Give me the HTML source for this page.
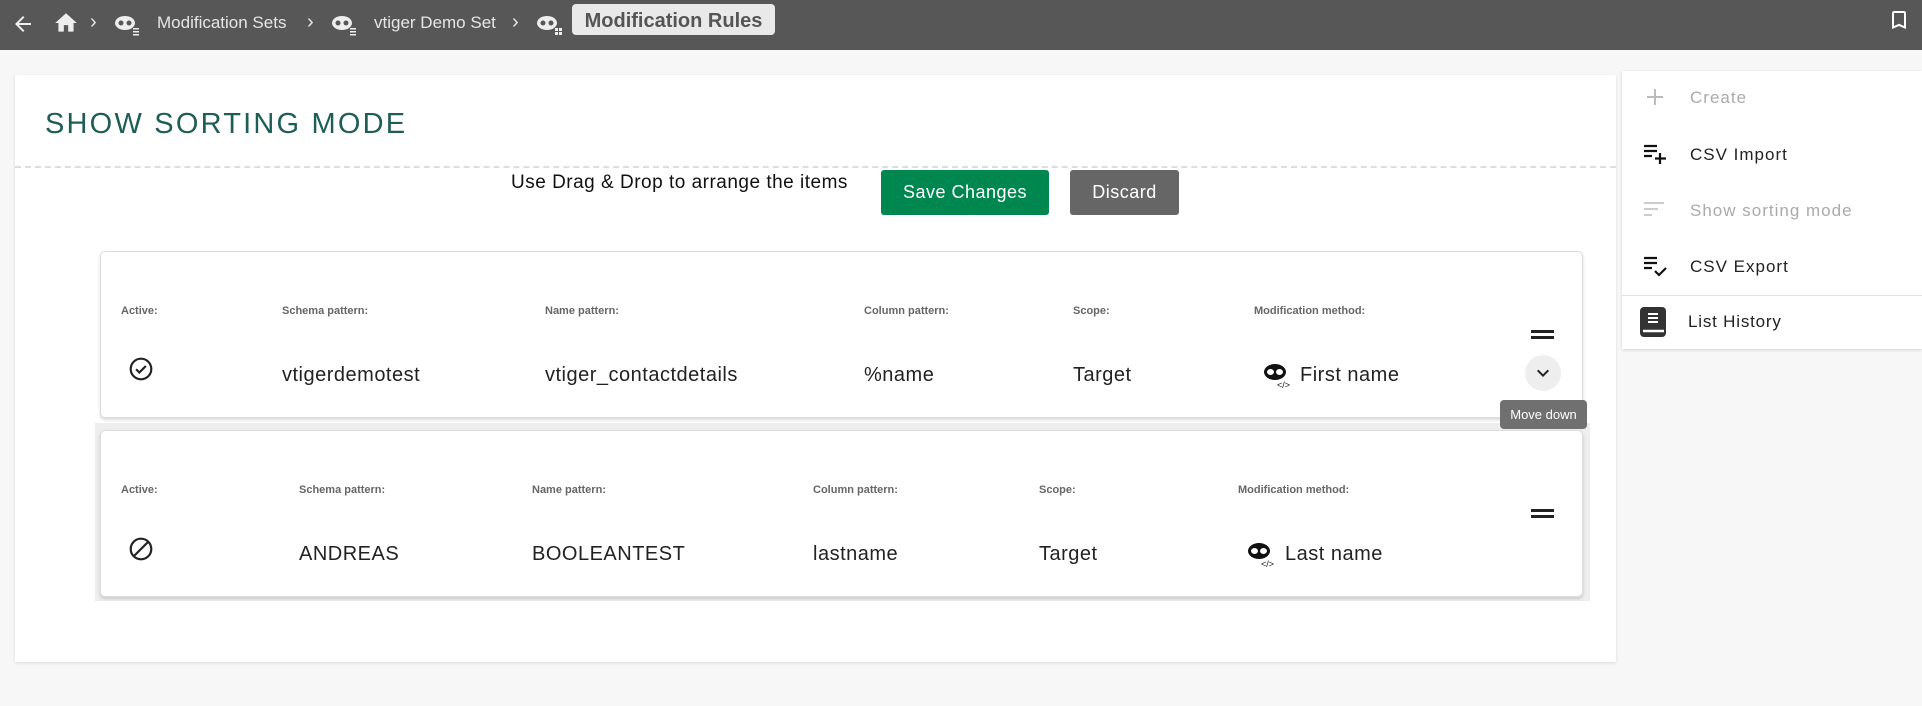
<!DOCTYPE html>
<html><head><meta charset="utf-8"><style>
*{box-sizing:border-box;margin:0;padding:0}
body{width:1922px;height:706px;background:#f7f7f7;font-family:"Liberation Sans",sans-serif;position:relative;overflow:hidden}
.abs{position:absolute}
.top{left:0;top:0;width:1922px;height:50px;background:#575757}
.bc{color:#e6e6e6;font-size:17px;top:13px}
.chip{left:572px;top:4px;width:203px;height:31px;background:#e9e9e9;border-radius:4px;color:#555;font-size:20px;font-weight:bold;line-height:34px;text-align:center}
.card{left:15px;top:75px;width:1601px;height:587px;background:#fff;box-shadow:0 1px 3px rgba(0,0,0,.12)}
.title{left:45px;top:108px;font-size:29px;color:#1f5e57;letter-spacing:2.2px}
.dash{left:15px;top:166px;width:1601px;border-top:2px dashed #ddd}
.btn{color:#fff;font-size:18px;text-align:center;line-height:45px;border-radius:3px;letter-spacing:.5px}
.row{left:100px;width:1483px;height:167px;background:#fff;border:1px solid #ddd;border-radius:5px;box-shadow:0 2px 3px rgba(0,0,0,.15)}
.lbl{font-size:11px;font-weight:bold;color:#666}
.val{font-size:20px;color:#222;letter-spacing:.5px}
.side{left:1622px;top:71px;width:300px;height:278px;background:#fff;box-shadow:0 1px 3px rgba(0,0,0,.15)}
.mi{font-size:17px;letter-spacing:1px;color:#222}
.dis{color:#aaa}
</style></head><body>
<div class="abs top"></div>
<svg class="abs" style="left:11px;top:12px" width="24" height="24" viewBox="0 0 24 24"><path d="M20 11H7.8l5.6-5.6L12 4l-8 8 8 8 1.4-1.4L7.8 13H20z" fill="#eee"/></svg>
<svg class="abs" style="left:53px;top:10px" width="26" height="26" viewBox="0 0 24 24"><path d="M10 20v-6h4v6h5v-8h3L12 3 2 12h3v8z" fill="#eee"/></svg>
<div class="abs bc" style="left:90px;top:11px;font-size:20px">›</div>
<svg class="abs" style="left:113px;top:14px" width="28" height="22" viewBox="0 0 28 22"><ellipse cx="12" cy="9" rx="10" ry="7" fill="#eee"/><circle cx="8" cy="9" r="2.5" fill="#575757"/><circle cx="16" cy="9" r="2.5" fill="#575757"/><rect x="20" y="14" width="6" height="1.5" fill="#eee"/><rect x="20" y="17" width="6" height="1.5" fill="#eee"/><rect x="20" y="20" width="6" height="1.5" fill="#eee"/></svg>
<div class="abs bc" style="left:157px">Modification Sets</div>
<div class="abs bc" style="left:307px;top:11px;font-size:20px">›</div>
<svg class="abs" style="left:330px;top:14px" width="28" height="22" viewBox="0 0 28 22"><ellipse cx="12" cy="9" rx="10" ry="7" fill="#eee"/><circle cx="8" cy="9" r="2.5" fill="#575757"/><circle cx="16" cy="9" r="2.5" fill="#575757"/><rect x="20" y="14" width="6" height="1.5" fill="#eee"/><rect x="20" y="17" width="6" height="1.5" fill="#eee"/><rect x="20" y="20" width="6" height="1.5" fill="#eee"/></svg>
<div class="abs bc" style="left:374px">vtiger Demo Set</div>
<div class="abs bc" style="left:512px;top:11px;font-size:20px">›</div>
<svg class="abs" style="left:535px;top:14px" width="28" height="22" viewBox="0 0 28 22"><ellipse cx="12" cy="9" rx="10" ry="7" fill="#eee"/><circle cx="8" cy="9" r="2.5" fill="#575757"/><circle cx="16" cy="9" r="2.5" fill="#575757"/><rect x="20" y="14" width="7" height="7" fill="#eee"/><path d="M20 17.5h7M23.5 14v7" stroke="#575757"/></svg>
<div class="abs chip">Modification Rules</div>
<svg class="abs" style="left:1887px;top:8px" width="24" height="24" viewBox="0 0 24 24"><path d="M17 3H7c-1.1 0-2 .9-2 2v16l7-3 7 3V5c0-1.1-.9-2-2-2zm0 15-5-2.2L7 18V5h10v13z" fill="#fff"/></svg>

<div class="abs card"></div>
<div class="abs title">SHOW SORTING MODE</div>
<div class="abs dash"></div>
<div class="abs" style="left:511px;top:172px;font-size:19px;color:#111;letter-spacing:.5px">Use Drag &amp; Drop to arrange the items</div>
<div class="abs btn" style="left:881px;top:170px;width:168px;background:#00874f">Save Changes</div>
<div class="abs btn" style="left:1070px;top:170px;width:109px;background:#666">Discard</div>

<div class="abs" style="left:95px;top:423px;width:1495px;height:178px;background:#eee"></div>
<div class="abs row" style="top:251px"></div>
<div class="abs row" style="top:430px"></div>

<div class="abs lbl" style="left:121px;top:305px">Active:</div>
<div class="abs lbl" style="left:282px;top:305px">Schema pattern:</div>
<div class="abs lbl" style="left:545px;top:305px">Name pattern:</div>
<div class="abs lbl" style="left:864px;top:305px">Column pattern:</div>
<div class="abs lbl" style="left:1073px;top:305px">Scope:</div>
<div class="abs lbl" style="left:1254px;top:305px">Modification method:</div>
<svg class="abs" style="left:128px;top:356px" width="26" height="26" viewBox="0 0 24 24"><circle cx="12" cy="12" r="9.5" fill="none" stroke="#222" stroke-width="2"/><path d="M7.5 12.2l3 3 6-6" fill="none" stroke="#222" stroke-width="2"/></svg>
<div class="abs val" style="left:282px;top:364px">vtigerdemotest</div>
<div class="abs val" style="left:545px;top:364px">vtiger_contactdetails</div>
<div class="abs val" style="left:864px;top:364px">%name</div>
<div class="abs val" style="left:1073px;top:364px">Target</div>
<svg class="abs" style="left:1263px;top:362px" width="32" height="28" viewBox="0 0 32 28"><ellipse cx="12" cy="10" rx="11" ry="8" fill="#111"/><ellipse cx="7.5" cy="10" rx="3.5" ry="3" fill="#fff"/><ellipse cx="16.5" cy="10" rx="3.5" ry="3" fill="#fff"/><text x="14" y="26" font-size="9" font-family="Liberation Sans" fill="#111">&lt;/&gt;</text></svg>
<div class="abs val" style="left:1300px;top:364px">First name</div>
<div class="abs" style="left:1531px;top:330px;width:23px;height:3px;background:#222;box-shadow:0 6px 0 #222"></div>
<div class="abs" style="left:1525px;top:355px;width:36px;height:36px;border-radius:50%;background:#eee"></div>
<svg class="abs" style="left:1531px;top:361px" width="24" height="24" viewBox="0 0 24 24"><path d="M7.4 8.6 12 13.2l4.6-4.6L18 10l-6 6-6-6z" fill="#222"/></svg>
<div class="abs" style="left:1500px;top:400px;width:87px;height:29px;background:#707070;border-radius:4px;color:#fff;font-size:13px;line-height:29px;text-align:center">Move down</div>

<div class="abs lbl" style="left:121px;top:484px">Active:</div>
<div class="abs lbl" style="left:299px;top:484px">Schema pattern:</div>
<div class="abs lbl" style="left:532px;top:484px">Name pattern:</div>
<div class="abs lbl" style="left:813px;top:484px">Column pattern:</div>
<div class="abs lbl" style="left:1039px;top:484px">Scope:</div>
<div class="abs lbl" style="left:1238px;top:484px">Modification method:</div>
<svg class="abs" style="left:128px;top:536px" width="26" height="26" viewBox="0 0 24 24"><circle cx="12" cy="12" r="9.5" fill="none" stroke="#222" stroke-width="2"/><path d="M5.5 18.5l13-13" stroke="#222" stroke-width="2"/></svg>
<div class="abs val" style="left:299px;top:543px">ANDREAS</div>
<div class="abs val" style="left:532px;top:543px">BOOLEANTEST</div>
<div class="abs val" style="left:813px;top:543px">lastname</div>
<div class="abs val" style="left:1039px;top:543px">Target</div>
<svg class="abs" style="left:1247px;top:541px" width="32" height="28" viewBox="0 0 32 28"><ellipse cx="12" cy="10" rx="11" ry="8" fill="#111"/><ellipse cx="7.5" cy="10" rx="3.5" ry="3" fill="#fff"/><ellipse cx="16.5" cy="10" rx="3.5" ry="3" fill="#fff"/><text x="14" y="26" font-size="9" font-family="Liberation Sans" fill="#111">&lt;/&gt;</text></svg>
<div class="abs val" style="left:1285px;top:543px">Last name</div>
<div class="abs" style="left:1531px;top:509px;width:23px;height:3px;background:#222;box-shadow:0 6px 0 #222"></div>

<div class="abs side"></div>
<svg class="abs" style="left:1643px;top:85px" width="24" height="24" viewBox="0 0 24 24"><path d="M12 4v16M4 12h16" stroke="#bbb" stroke-width="2"/></svg>
<div class="abs mi dis" style="left:1690px;top:88px">Create</div>
<svg class="abs" style="left:1643px;top:142px" width="26" height="24" viewBox="0 0 26 24"><path d="M1 4h13M1 9h13M1 14h8M17 11v11M12 16.5h11" stroke="#111" stroke-width="2.2"/></svg>
<div class="abs mi" style="left:1690px;top:145px">CSV Import</div>
<svg class="abs" style="left:1643px;top:198px" width="24" height="24" viewBox="0 0 24 24"><path d="M1 5h20M1 11h14M1 17h8" stroke="#ccc" stroke-width="2"/></svg>
<div class="abs mi dis" style="left:1690px;top:201px">Show sorting mode</div>
<svg class="abs" style="left:1643px;top:254px" width="26" height="24" viewBox="0 0 26 24"><path d="M1 4h13M1 9h13M1 14h8M12 17l4 4 7-7" stroke="#111" stroke-width="2.2" fill="none"/></svg>
<div class="abs mi" style="left:1690px;top:257px">CSV Export</div>
<div class="abs" style="left:1622px;top:295px;width:300px;border-top:1px solid #e3e3e3"></div>
<svg class="abs" style="left:1639px;top:306px" width="28" height="32" viewBox="0 0 28 32"><rect x="1" y="1" width="26" height="30" rx="4" fill="#333"/><path d="M9 8h10M9 12h10M9 16h10" stroke="#fff" stroke-width="2"/><path d="M4 25h21" stroke="#fff" stroke-width="2.5"/></svg>
<div class="abs mi" style="left:1688px;top:312px;letter-spacing:.8px">List History</div>
</body></html>
